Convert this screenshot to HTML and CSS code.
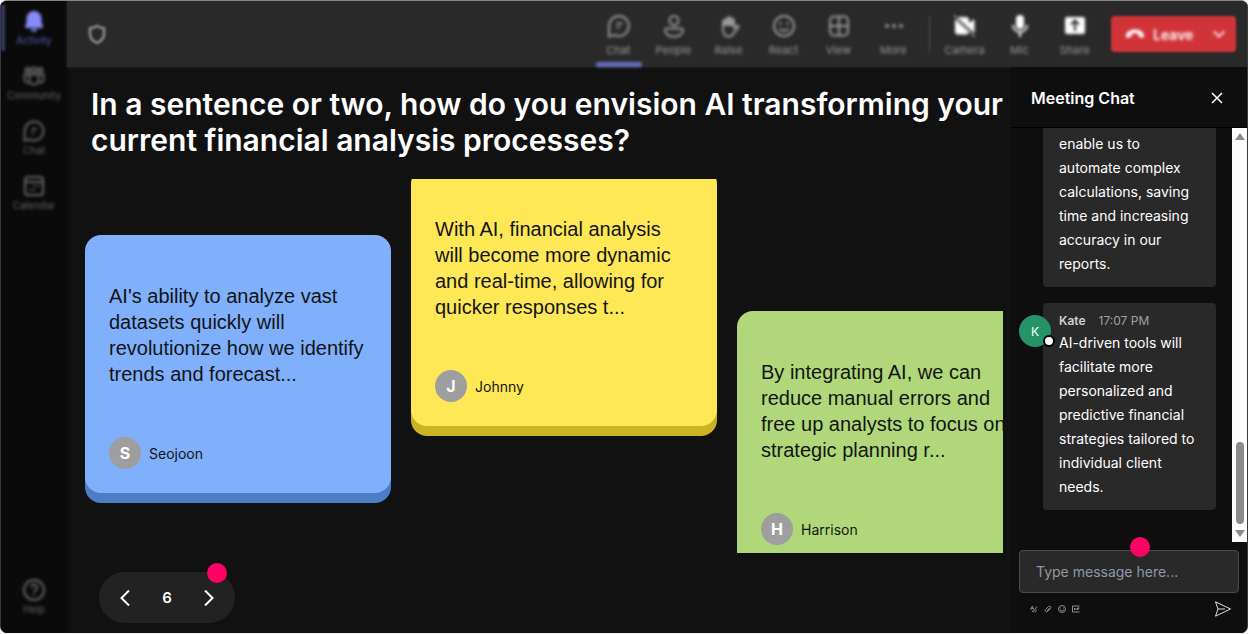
FILE: index.html
```html
<!DOCTYPE html>
<html lang="en">
<head>
    <meta charset="UTF-8">
    <meta name="viewport" content="width=device-width, initial-scale=1.0">
    <title>Meeting</title>
    <link rel="stylesheet" href="styles.css">
</head>
<body>

<div class="window">
    <nav class="sidebar">
        <a href="#" class="side-item active">
            <svg viewBox="0 0 24 24" fill="currentColor"><path d="M12 2a7.500 7.500 0 0 0-7.500 7.500v4L3 17.500c-.2.8.2 1.500 1 1.500h16c.8 0 1.200-.7 1-1.500l-1.500-4v-4A7.500 7.500 0 0 0 12 2zM8.500 20a3.600 3.600 0 0 0 7 0z"/></svg>
            <span>Activity</span>
        </a>
        <a href="#" class="side-item">
            <svg viewBox="0 0 24 24" fill="none" stroke="currentColor" stroke-width="2"><circle cx="12" cy="6" r="2.500"/><circle cx="5.500" cy="6" r="2"/><circle cx="18.500" cy="6" r="2"/><path d="M7.500 10.500h9V16a4.500 4.500 0 0 1-9 0zM7 10.500H2.500V15c0 2.500 2 4 4.500 3.800M17 10.500h4.500V15c0 2.500-2 4-4.500 3.800"/></svg>
            <span>Community</span>
        </a>
        <a href="#" class="side-item">
            <svg viewBox="0 0 24 24" fill="none" stroke="currentColor" stroke-width="2"><path d="M12 2.500a9.500 9.500 0 1 1-4.500 17.900L2.500 21.500l.2-9A9.500 9.500 0 0 1 12 2.500zM9.500 10h5.500M9.500 14h2.500"/></svg>
            <span>Chat</span>
        </a>
        <a href="#" class="side-item">
            <svg viewBox="0 0 24 24" fill="none" stroke="currentColor" stroke-width="2"><rect x="3" y="3" width="18" height="18" rx="3"/><path d="M3 8h18M11 12h2M15 12h2M7.500 16h2M11 16h2"/></svg>
            <span>Calendar</span>
        </a>
        <a href="#" class="side-item help">
            <svg viewBox="0 0 24 24" fill="none" stroke="currentColor" stroke-width="2"><circle cx="12" cy="12" r="10"/><path d="M9 9.500a3 3 0 1 1 4.500 2.600c-1 .6-1.500 1-1.500 2.200M12 16v2"/></svg>
            <span>Help</span>
        </a>
    </nav>

    <div class="workspace">
        <header class="topbar">
            <svg class="shield" viewBox="0 0 24 24" fill="none" stroke="currentColor" stroke-width="3"><path d="M12 4c2.500 1.500 4.500 2.200 7 2.300V12c0 4.300-2.500 7-7 8.800C7.500 19 5 16.300 5 12V6.300C7.500 6.200 9.500 5.500 12 4z"/></svg>

            <div class="tools">
                <button class="tool active">
                    <svg viewBox="0 0 24 24" fill="none" stroke="currentColor" stroke-width="2"><path d="M12 2a10 10 0 1 1-4.500 19L2 22.500V12A10 10 0 0 1 12 2zM9.500 9.500h6M9.500 13.500h3"/></svg>
                    <span>Chat</span>
                </button>
                <button class="tool">
                    <svg viewBox="0 0 24 24" fill="none" stroke="currentColor" stroke-width="2"><circle cx="12" cy="6.500" r="4.500"/><path d="M5 14.500h14c1.200 0 2 .8 2 2 0 3.500-4 6-9 6s-9-2.500-9-6c0-1.200.8-2 2-2z"/></svg>
                    <span>People</span>
                </button>
                <button class="tool">
                    <svg viewBox="0 0 24 24" fill="none" stroke="currentColor" stroke-width="2"><path d="M6 7V5h3V3h3V2h2v2h3v8H6z" fill="currentColor" stroke="none"/><path d="M6 6v9c0 5 2 7.500 5.500 7.500 2.500 0 4.200-1 5.500-3.500l4.300-5.600c.7-1.200-.6-2.400-1.800-1.600L17 14V5"/></svg>
                    <span>Raise</span>
                </button>
                <button class="tool">
                    <svg viewBox="0 0 24 24" fill="none" stroke="currentColor" stroke-width="2"><circle cx="12" cy="12" r="10"/><path d="M7.500 14.500c2 3 7 3 9 0M8.500 8v3M15.500 8v3"/></svg>
                    <span>React</span>
                </button>
                <button class="tool">
                    <svg viewBox="0 0 24 24" fill="none" stroke="currentColor" stroke-width="2"><rect x="3" y="2.500" width="18" height="19" rx="4"/><path d="M12 2.500v19M3 12h18"/></svg>
                    <span>View</span>
                </button>
                <button class="tool">
                    <svg viewBox="0 0 24 24" fill="currentColor"><circle cx="5" cy="12" r="2"/><circle cx="12" cy="12" r="2"/><circle cx="19" cy="12" r="2"/></svg>
                    <span>More</span>
                </button>
            </div>

            <div class="tools devices">
                <button class="tool">
                    <svg viewBox="0 0 24 24"><path fill="currentColor" d="M6 3h7c1.700 0 3 1.300 3 3v3l5.500-4v14L16 15v2.500c0 1.700-1.300 3-3 3H5c-1.700 0-3-1.300-3-3V6z"/><path d="M1 2l21 20" fill="none" stroke="#292929" stroke-width="3"/><path d="M1 1l21 22" fill="none" stroke="currentColor" stroke-width="1"/></svg>
                    <span>Camera</span>
                </button>
                <button class="tool">
                    <svg viewBox="0 0 24 24"><rect x="8" y="1" width="8" height="14" rx="4" fill="currentColor"/><path d="M5 11c0 9 14 9 14 0M12 18v5" fill="none" stroke="currentColor" stroke-width="2"/></svg>
                    <span>Mic</span>
                </button>
                <button class="tool">
                    <svg viewBox="0 0 24 24"><rect x="2" y="3" width="20" height="17" rx="2" fill="currentColor"/><path d="M12 17V7M8 10.500L12 6.500l4 4" fill="none" stroke="#292929" stroke-width="2"/></svg>
                    <span>Share</span>
                </button>
            </div>

            <button class="leave">
                <svg class="phone" viewBox="0 0 24 24" fill="currentColor"><path d="M12 6.500c5.500 0 10.500 2.600 10.800 7.500.1 1.800-.8 2.800-2.300 2.500l-2.500-.6c-1.200-.3-1.700-1-1.700-2v-2c-2.800-1-5.800-1-8.600 0v2c0 1-.5 1.700-1.700 2l-2.500.6c-1.500.3-2.400-.7-2.300-2.500C1.500 9.100 6.500 6.500 12 6.500z"/></svg>
                <span>Leave</span>
                <svg class="caret" viewBox="0 0 16 16" fill="none" stroke="currentColor" stroke-width="2"><path d="M2 5l6 6 6-6"/></svg>
            </button>
        </header>

        <div class="content">
            <main class="stage">
                <h1>In a sentence or two, how do you envision AI transforming your current financial analysis processes?</h1>

                <div class="board">
                    <article class="card blue">
                        <p>AI's ability to analyze vast datasets quickly will revolutionize how we identify trends and forecast...</p>
                        <div class="author"><span class="initial">S</span>Seojoon</div>
                    </article>
                    <article class="card yellow">
                        <p>With AI, financial analysis will become more dynamic and real-time, allowing for quicker responses t...</p>
                        <div class="author"><span class="initial">J</span>Johnny</div>
                    </article>
                    <article class="card green">
                        <p>By integrating AI, we can reduce manual errors and free up analysts to focus on strategic planning r...</p>
                        <div class="author"><span class="initial">H</span>Harrison</div>
                    </article>
                </div>

                <div class="pager">
                    <button aria-label="Previous"><svg viewBox="0 0 16 16" fill="none" stroke="currentColor" stroke-width="2"><path d="M12 0.500L4.500 8l7.500 7.500"/></svg></button>
                    <span>6</span>
                    <button aria-label="Next"><svg viewBox="0 0 16 16" fill="none" stroke="currentColor" stroke-width="2"><path d="M4 0.500L11.500 8L4 15.500"/></svg></button>
                    <i class="dot"></i>
                </div>
            </main>

            <aside class="chat">
                <div class="chat-header">
                    <h2>Meeting Chat</h2>
                    <button aria-label="Close"><svg viewBox="0 0 12 12" fill="none" stroke="currentColor" stroke-width="1.500"><path d="M1 1l10 10M11 1L1 11"/></svg></button>
                </div>

                <div class="chat-body">
                    <div class="messages">
                        <div class="message">
                            <div class="bubble continued">
                                <p>enable us to automate complex calculations, saving time and increasing accuracy in our reports.</p>
                            </div>
                        </div>
                        <div class="message">
                            <span class="avatar">K<i class="status"></i></span>
                            <div class="bubble">
                                <div class="meta"><b>Kate</b><time>17:07 PM</time></div>
                                <p>AI-driven tools will facilitate more personalized and predictive financial strategies tailored to individual client needs.</p>
                            </div>
                        </div>
                    </div>
                    <div class="scrollbar">
                        <span class="arrow up"></span>
                        <span class="thumb"></span>
                        <span class="arrow down"></span>
                    </div>
                </div>

                <form class="composer">
                    <div class="field">
                        <input type="text" placeholder="Type message here..." aria-label="Message">
                        <i class="dot"></i>
                    </div>
                    <div class="actions">
                        <button type="button" aria-label="Format"><svg viewBox="0 0 16 16" fill="none" stroke="currentColor" stroke-width="2"><path d="M1 9l4-7 2 7M2 7h4M14 3L6 14l-2-3M9 14c3 0 4-2 3-5"/></svg></button>
                        <button type="button" aria-label="Attach"><svg viewBox="0 0 16 16" fill="none" stroke="currentColor" stroke-width="2"><path d="M11 6l-5 6M3 9l6-6c3-2 6 1 4 4l-6 6c-3 2-6-1-4-4z"/></svg></button>
                        <button type="button" aria-label="Emoji"><svg viewBox="0 0 16 16" fill="none" stroke="currentColor" stroke-width="2"><circle cx="8" cy="8" r="7"/><path d="M4 9c1 4 7 4 8 0M5 5v2M11 5v2"/></svg></button>
                        <button type="button" aria-label="GIF"><svg viewBox="0 0 16 16" fill="none" stroke="currentColor" stroke-width="2"><path d="M15 2H1v12h14M5 6v4M8 6v4M11 10V6h4M11 8h3"/></svg></button>
                        <button type="submit" class="send" aria-label="Send"><svg viewBox="0 0 16 16" fill="none" stroke="currentColor" stroke-width="1"><path d="M0.500 0.800L15.500 8L0.500 15.200L3 8zM3 8h7"/></svg></button>
                    </div>
                </form>
            </aside>
        </div>
    </div>
</div>

</body>
</html>
```
FILE: styles.css
```css
* {
    box-sizing: border-box;
}

body {
    font-family: Inter, sans-serif;
    background-color: #f4f4f4;
    color: white;
    margin: 0;
}

h1, h2, p {
    margin: 0;
}

button {
    padding: 0;
    border: none;
    background: none;
    color: inherit;
    font-family: inherit;
    cursor: pointer;
}

svg {
    display: block;
}

.window {
    display: flex;
    height: calc(100vh - 1px);
    border: 1px solid #3a3a3a;
    border-top-color: #858585;
    border-bottom: none;
    border-radius: 7px;
    background-color: #111;
    overflow: hidden;
}

/* The app chrome is out of focus: the blur on a group and on its parts adds up */
.side-item, .side-item > *,
.tools, .tool,
.leave, .leave > * {
    filter: blur(1px);
}

/* Sidebar */
.sidebar {
    display: flex;
    flex-direction: column;
    gap: 17px;
    width: 66px;
    flex-shrink: 0;
    padding: 8px 0 17px;
    background-color: #0a0a0a;
    box-shadow: 0 0 3px #0a0a0a;
}

.side-item {
    position: relative;
    display: flex;
    flex-direction: column;
    align-items: center;
    color: #666;
    font-size: 10px;
    line-height: 14px;
    text-decoration: none;
}

.side-item svg {
    width: 24px;
    height: 24px;
}

.side-item.active {
    color: #868cfc;
}

.side-item.active span {
    color: #5a5eb4;
}

.side-item.active::before {
    content: "";
    position: absolute;
    left: 0;
    top: -4px;
    width: 4px;
    height: 46px;
    background-color: #38386f;
}

.help {
    margin-top: auto;
}

/* Top bar */
.workspace {
    display: flex;
    flex-direction: column;
    flex: 1;
    min-width: 0;
}

.topbar {
    display: flex;
    align-items: center;
    height: 66px;
    flex-shrink: 0;
    padding: 0 11px 0 18px;
    background-color: #292929;
    box-shadow: 0 0 3px #292929;
}

.shield {
    width: 24px;
    height: 24px;
    color: #808080;
    filter: blur(1px);
}

.tools {
    display: flex;
    height: 100%;
    margin-left: auto;
    color: #9a9a9a;
}

.tool {
    position: relative;
    display: flex;
    flex-direction: column;
    align-items: center;
    gap: 5px;
    width: 55px;
    padding-top: 13px;
    font-size: 11px;
    line-height: 14px;
}

.tool svg {
    width: 24px;
    height: 24px;
}

.tool.active::after {
    content: "";
    position: absolute;
    left: 5px;
    right: 4px;
    bottom: 0;
    height: 5px;
    border-radius: 2px;
    background-color: #6a6ec4;
}

.devices {
    margin-left: 8px;
    padding-left: 8px;
    background: linear-gradient(#505050, #505050) left center / 1px 36px no-repeat;
}

.devices svg {
    color: white;
}

.leave {
    display: flex;
    align-items: center;
    width: 125px;
    height: 36px;
    margin-left: 9px;
    padding: 0 10px 0 14px;
    border-radius: 4px;
    background-color: #d13438;
    color: white;
    font-size: 14px;
    font-weight: 600;
}

.phone {
    width: 20px;
    height: 20px;
    margin-right: 8px;
}

.caret {
    width: 14px;
    height: 14px;
    margin-left: auto;
}

/* Stage */
.content {
    position: relative;
    display: flex;
    flex: 1;
    min-height: 0;
}

.stage {
    display: flex;
    flex-direction: column;
    flex: 1;
    min-width: 0;
    padding: 19px 8px 10px 18px;
}

h1 {
    padding-left: 6px;
    font-size: 30px;
    font-weight: 600;
    line-height: 36px;
}

.board {
    display: flex;
    align-items: flex-start;
    gap: 20px;
    flex: 1;
    min-height: 0;
    margin: 21px 0 19px;
    overflow: hidden;
}

.card {
    display: flex;
    flex-direction: column;
    justify-content: space-between;
    width: 306px;
    min-height: 258px;
    flex-shrink: 0;
    padding: 48px 24px 24px;
    border-radius: 16px;
    color: #141414;
}

.card p {
    font-family: "Liberation Sans", Arial, sans-serif;
    font-size: 20px;
    line-height: 26px;
}

.blue {
    margin-top: 56px;
    background-color: #80b0fc;
    box-shadow: 0 10px 0 #4c7dc7;
}

.yellow {
    margin-top: -11px;
    background-color: #ffe856;
    box-shadow: 0 10px 0 #cab423;
}

.green {
    margin-top: 132px;
    background-color: #b0d87a;
    box-shadow: 0 10px 0 #80a84a;
}

.author {
    display: flex;
    align-items: center;
    gap: 8px;
    font-size: 14px;
}

.initial {
    display: flex;
    align-items: center;
    justify-content: center;
    width: 32px;
    height: 32px;
    border-radius: 50%;
    background-color: #9e9e9e;
    color: white;
    font-size: 16px;
    font-weight: 700;
}

.pager {
    position: relative;
    display: flex;
    align-items: center;
    justify-content: space-between;
    width: 136px;
    height: 51px;
    flex-shrink: 0;
    margin-left: 14px;
    padding: 0 18px;
    border-radius: 26px;
    background-color: #222;
    font-size: 15px;
    font-weight: 600;
}

.pager svg {
    width: 16px;
    height: 16px;
}

.dot {
    position: absolute;
    width: 20px;
    height: 20px;
    border-radius: 50%;
    background-color: #ff0065;
}

.pager .dot {
    top: -9px;
    right: 8px;
}

/* Chat panel */
.chat {
    display: flex;
    flex-direction: column;
    width: 236px;
    flex-shrink: 0;
    background-color: #0e0e0e;
}

.chat-header {
    display: flex;
    align-items: center;
    justify-content: space-between;
    height: 61px;
    flex-shrink: 0;
    padding: 2px 24px 0 20px;
    border-bottom: 1px solid black;
}

h2 {
    font-size: 16px;
    font-weight: 600;
}

.chat-header svg {
    width: 12px;
    height: 12px;
}

.chat-body {
    display: flex;
    flex: 1;
    min-height: 0;
}

.messages {
    display: flex;
    flex-direction: column;
    justify-content: flex-end;
    gap: 16px;
    flex: 1;
    padding: 0 16px 32px 8px;
    overflow: hidden;
}

.message {
    display: flex;
    justify-content: flex-end;
}

.bubble {
    width: 173px;
    padding: 7px 16px 11px;
    border-radius: 4px;
    background-color: #292929;
    font-size: 14px;
    line-height: 24px;
}

.continued {
    padding-top: 29px;
}

.meta {
    display: flex;
    gap: 13px;
    color: #d0d0d0;
    font-size: 12px;
    line-height: 21px;
}

.meta b {
    font-weight: 600;
}

.meta time {
    color: #a0a0a0;
}

.avatar {
    position: relative;
    z-index: 1;
    display: flex;
    align-items: center;
    justify-content: center;
    width: 32px;
    height: 32px;
    margin: 12px -8px 0 0;
    border-radius: 50%;
    background-color: #249367;
    font-size: 12px;
}

.status {
    position: absolute;
    right: -4px;
    bottom: 0;
    width: 12px;
    height: 12px;
    border: 2px solid black;
    border-radius: 50%;
    background-color: white;
}

.scrollbar {
    display: flex;
    flex-direction: column;
    align-items: center;
    width: 15px;
    padding: 5px 0;
    background-color: #fcfcfc;
}

.arrow {
    border: 5px solid transparent;
}

.up {
    border-top: none;
    border-bottom: 7px solid #8b8b8b;
}

.down {
    border-bottom: none;
    border-top: 7px solid #8b8b8b;
}

.thumb {
    width: 8px;
    height: 82px;
    margin: auto 0 6px;
    border-radius: 4px;
    background-color: #8b8b8b;
}

.composer {
    padding: 8px 8px 16px;
}

.field {
    position: relative;
}

.field input {
    display: block;
    width: 100%;
    height: 43px;
    padding: 0 16px;
    border: 1px solid #4a4a4a;
    border-radius: 4px;
    background-color: #292929;
    color: white;
    font-family: inherit;
    font-size: 14px;
}

.field input::placeholder {
    color: #8f99a3;
}

.field .dot {
    left: 50%;
    top: -13px;
    margin-left: 1px;
}

.actions {
    display: flex;
    align-items: center;
    gap: 6px;
    margin-top: 8px;
    padding: 0 8px 0 11px;
    color: #8c8c8c;
}

.actions svg {
    width: 8px;
    height: 8px;
}

.actions .send {
    margin-left: auto;
    color: #e0e0e0;
}

.actions .send svg {
    width: 16px;
    height: 16px;
}
```
